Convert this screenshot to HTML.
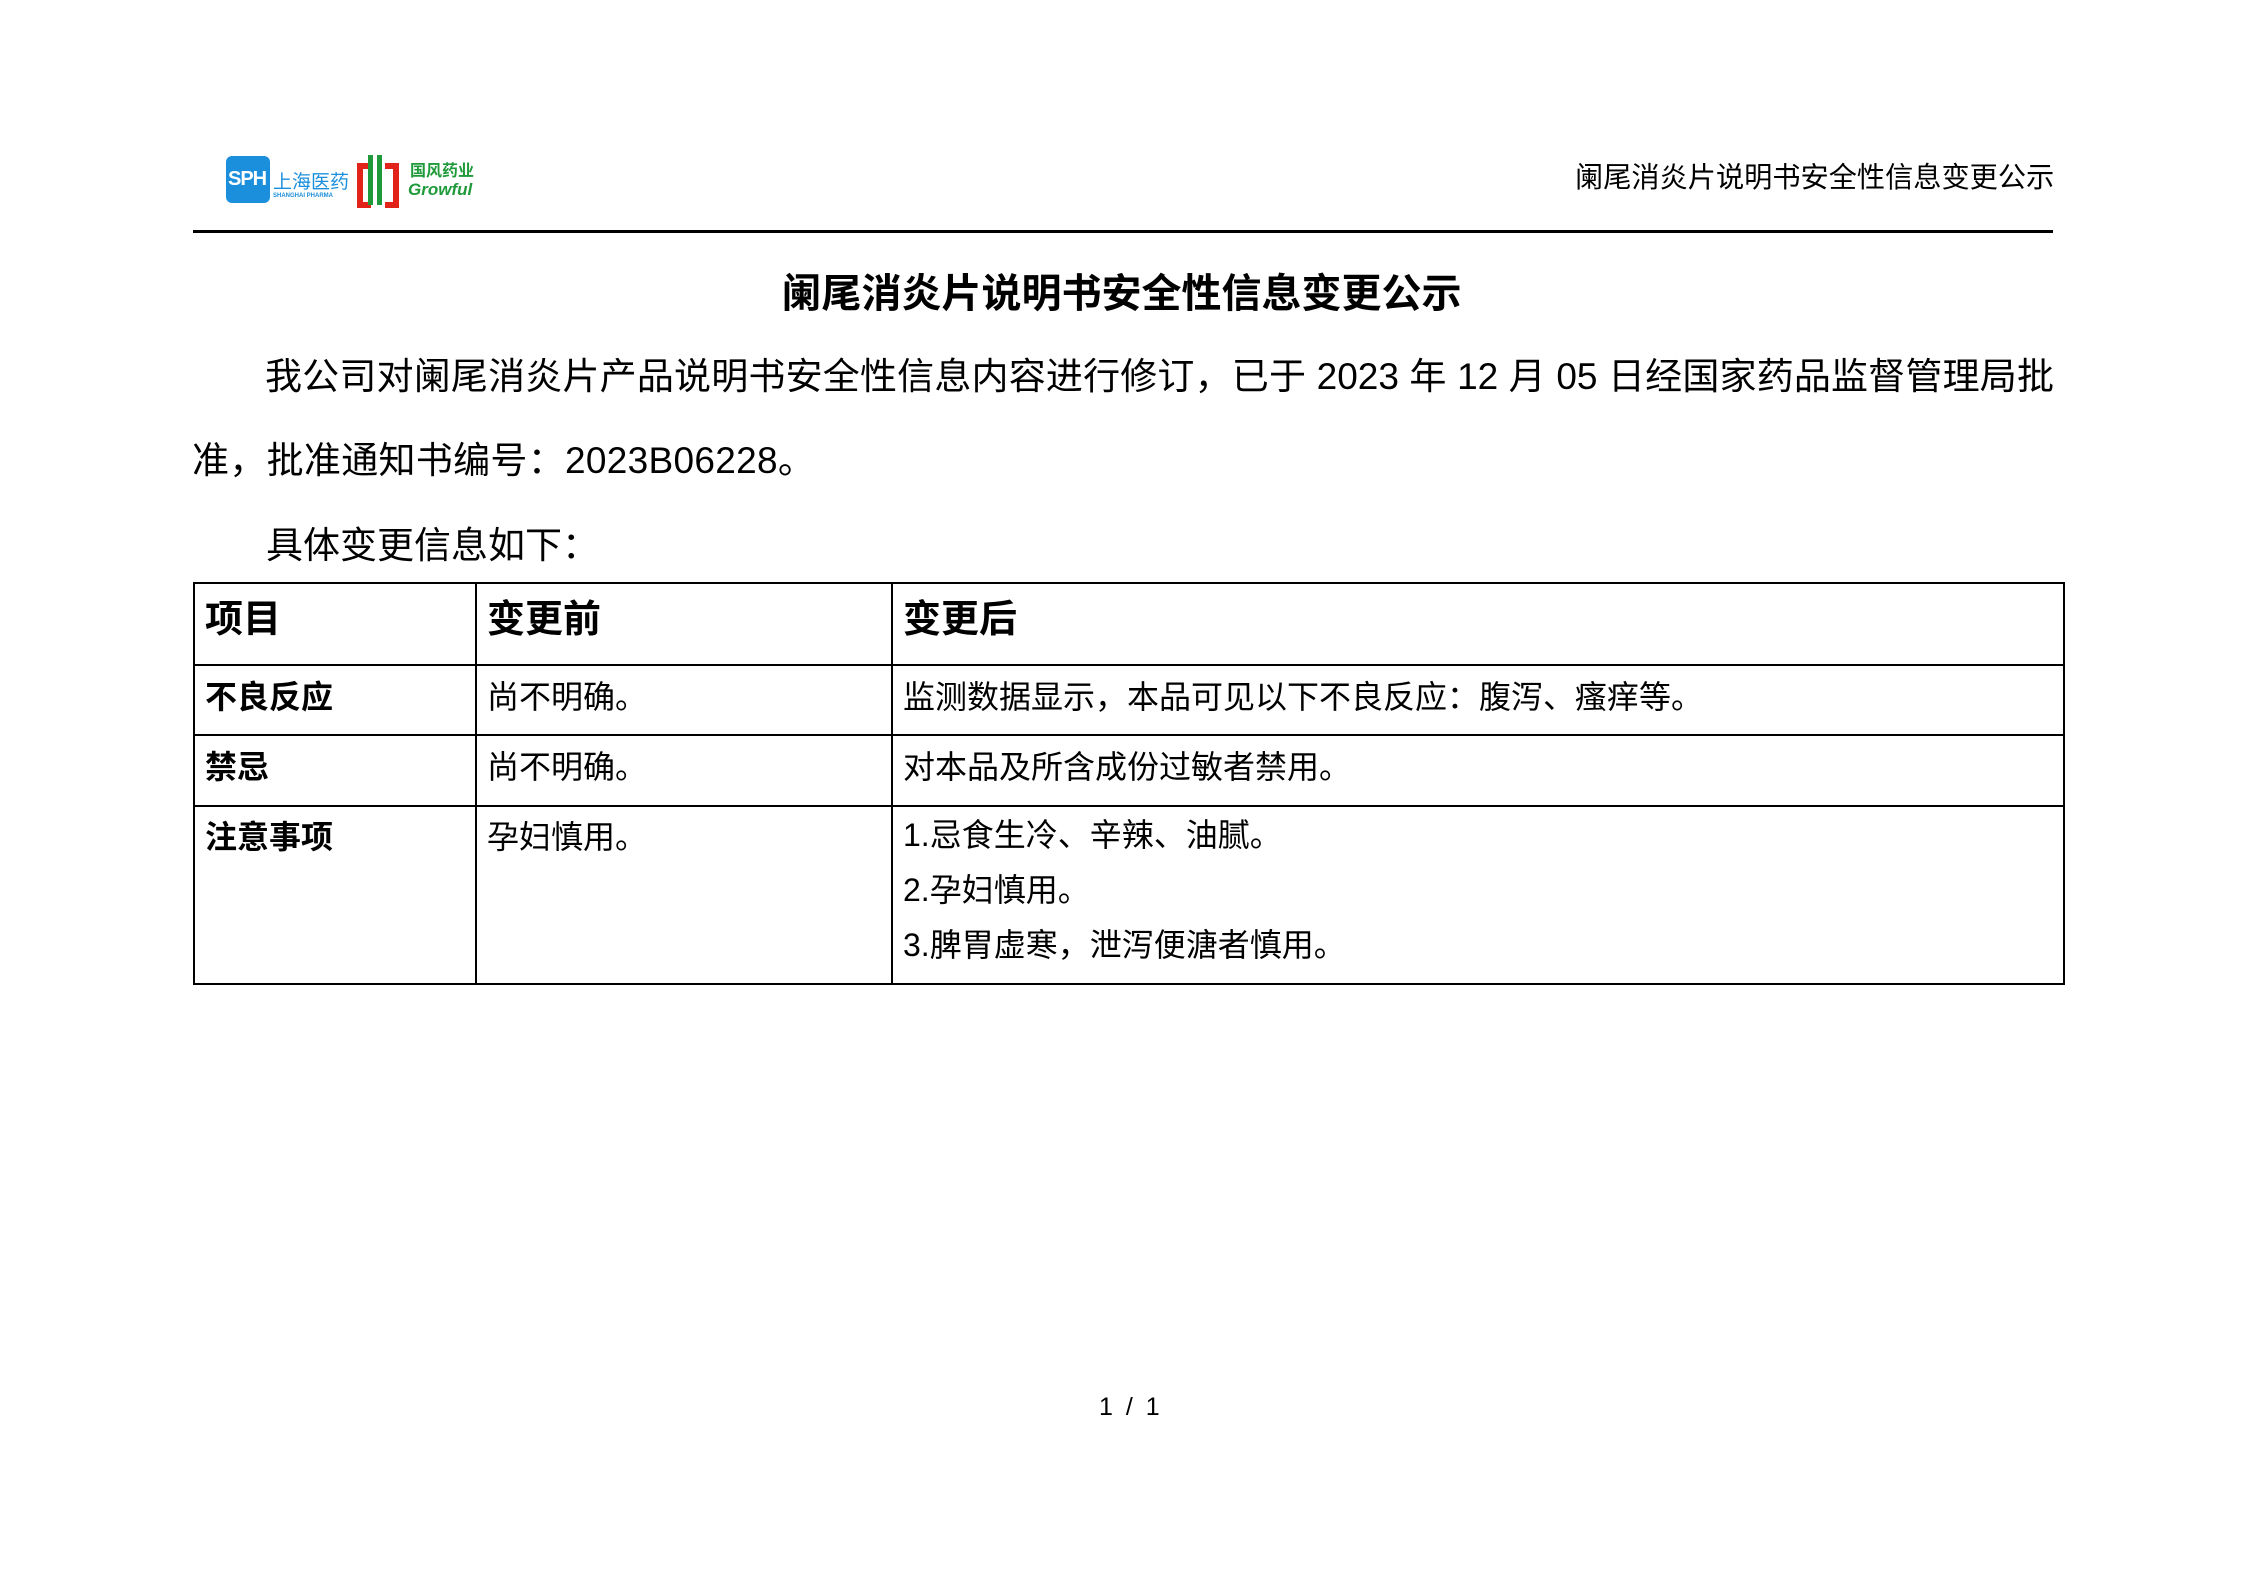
<!DOCTYPE html>
<html><head><meta charset="utf-8"><style>
body{margin:0;background:#fff;}
#p{position:relative;width:2245px;height:1587px;overflow:hidden;font-family:"Liberation Sans","Noto Sans CJK SC",sans-serif;color:#000;}
.a{position:absolute;white-space:nowrap;line-height:1;}
table{position:absolute;left:193px;top:582px;width:1872px;border-collapse:collapse;font-size:32px;}
td{border:2.5px solid #000;vertical-align:top;padding:0 10px;line-height:1;}
</style></head><body><div id="p">
<!-- logo -->
<div class="a" style="left:226px;top:156px;width:44px;height:47px;background:#1c8fdc;border-radius:6px;"></div>
<div class="a" style="left:228px;top:168px;font:bold 20px 'Liberation Sans',sans-serif;color:#fff;letter-spacing:-1px;">SPH</div>
<div class="a" style="left:273px;top:171px;font-size:19px;color:#1c8fdc;font-family:'Noto Sans CJK SC',sans-serif;">上海医药</div>
<div class="a" style="left:273px;top:193px;font-size:6px;color:#1c8fdc;font-weight:bold;">SHANGHAI PHARMA</div>
<div class="a" style="left:357px;top:163px;width:8px;height:33px;border:6px solid #e2231a;border-right:none;"></div>
<div class="a" style="left:385px;top:163px;width:8px;height:33px;border:6px solid #e2231a;border-left:none;"></div>
<div class="a" style="left:368px;top:155px;width:5px;height:50px;background:#1f9a3a;"></div>
<div class="a" style="left:377px;top:155px;width:5px;height:50px;background:#1f9a3a;"></div>
<div class="a" style="left:410px;top:161px;font-size:16px;color:#1f9a3a;font-weight:bold;font-family:'Noto Sans CJK SC',sans-serif;">国风药业</div>
<div class="a" style="left:408px;top:180px;font:bold italic 17px 'Liberation Sans',sans-serif;color:#1f9a3a;">Growful</div>
<!-- header -->
<div class="a" style="left:1575px;top:163px;font-size:28.2px;">阑尾消炎片说明书安全性信息变更公示</div>
<div class="a" style="left:193px;top:230px;width:1860px;height:3px;background:#000;"></div>
<div class="a" style="left:0;width:2245px;text-align:center;top:274px;font-size:40px;font-weight:bold;padding-right:2px;box-sizing:border-box;">阑尾消炎片说明书安全性信息变更公示</div>
<div class="a" style="left:265px;top:358px;width:1789px;font-size:37px;text-align:justify;text-align-last:justify;">我公司对阑尾消炎片产品说明书安全性信息内容进行修订，已于 2023 年 12 月 05 日经国家药品监督管理局批</div>
<div class="a" style="left:192px;top:442px;font-size:37px;letter-spacing:0.3px;">准，批准通知书编号：2023B06228。</div>
<div class="a" style="left:266px;top:527px;font-size:37px;">具体变更信息如下：</div>
<table>
<colgroup><col style="width:282px"><col style="width:416px"><col></colgroup>
<tr style="height:82px"><td style="font-weight:bold;padding-top:17px;font-size:38px">项目</td><td style="font-weight:bold;padding-top:17px;font-size:38px">变更前</td><td style="font-weight:bold;padding-top:17px;font-size:38px">变更后</td></tr>
<tr style="height:70px"><td style="font-weight:bold;padding-top:15px">不良反应</td><td style="padding-top:15px">尚不明确。</td><td style="padding-top:15px">监测数据显示，本品可见以下不良反应：腹泻、瘙痒等。</td></tr>
<tr style="height:71px"><td style="font-weight:bold;padding-top:15px">禁忌</td><td style="padding-top:15px">尚不明确。</td><td style="padding-top:15px">对本品及所含成份过敏者禁用。</td></tr>
<tr style="height:178px"><td style="font-weight:bold;padding-top:14px">注意事项</td><td style="padding-top:14px">孕妇慎用。</td><td style="line-height:55px;padding-top:1px">1.忌食生冷、辛辣、油腻。<br>2.孕妇慎用。<br>3.脾胃虚寒，泄泻便溏者慎用。</td></tr>
</table>
<div class="a" style="left:1099px;top:1395px;font-size:25px;letter-spacing:3px;">1 / 1</div>
</div></body></html>
